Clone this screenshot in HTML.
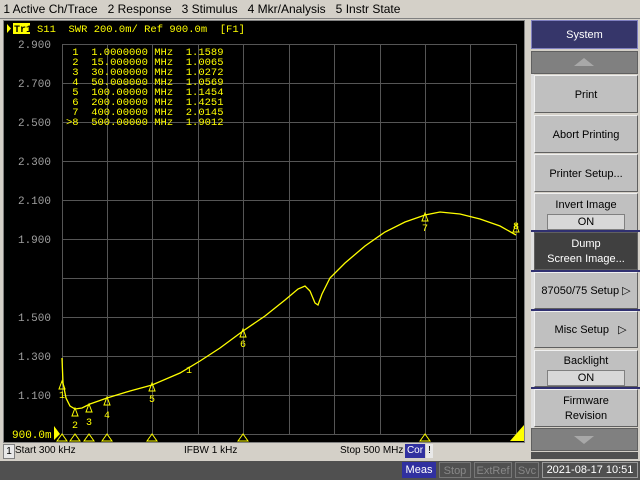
<!DOCTYPE html>
<html><head><style>
body{margin:0;width:640px;height:480px;background:#d4d0c8;font-family:"Liberation Sans",sans-serif;overflow:hidden;position:relative}
.a{position:absolute}
.menu{top:0;left:0;width:640px;height:18px;font-size:12px;line-height:18px;color:#000;border-bottom:1px solid #808080}
.btn{position:absolute;left:534px;width:104px;background:#c0c0c0;border:1px solid;border-color:#f0f0f0 #606060 #606060 #f0f0f0;font-size:11px;text-align:center;box-sizing:border-box;color:#000}
.sep{position:absolute;left:531px;width:109px;height:2px;background:#303070}
.on{margin:2px auto 0;width:76px;height:14px;background:#d8d8d8;border:1px solid #808080;line-height:14px}
svg text{white-space:pre}
</style></head><body>
<div class="a menu">&nbsp;1 Active Ch/Trace&nbsp;&nbsp;&nbsp;2 Response&nbsp;&nbsp;&nbsp;3 Stimulus&nbsp;&nbsp;&nbsp;4 Mkr/Analysis&nbsp;&nbsp;&nbsp;5 Instr State</div>
<div class="a" style="left:3px;top:20px;width:522px;height:423px;background:#000;border:1px solid #808080;box-sizing:border-box"></div>
<svg class="a" style="left:0;top:0" width="530" height="443">
<g stroke="#555" stroke-width="1">
<path d="M62.5 44V434M107.5 44V434M152.5 44V434M198.5 44V434M243.5 44V434M289.5 44V434M334.5 44V434M380.5 44V434M425.5 44V434M470.5 44V434M516.5 44V434"/>
<path d="M62 44.5H516M62 83.5H516M62 122.5H516M62 161.5H516M62 200.5H516M62 239.5H516M62 278.5H516M62 317.5H516M62 356.5H516M62 395.5H516M62 434.5H516"/>
</g>
<g font-family="Liberation Mono,monospace" font-size="11" fill="#a0a0a0" text-anchor="end">
<text x="51" y="48">2.900</text><text x="51" y="87">2.700</text><text x="51" y="126">2.500</text><text x="51" y="165">2.300</text><text x="51" y="204">2.100</text><text x="51" y="243">1.900</text><text x="51" y="321">1.500</text><text x="51" y="360">1.300</text><text x="51" y="399">1.100</text>
</g>
<text x="12" y="438" font-family="Liberation Mono,monospace" font-size="11" fill="#ffff00">900.0m</text>
<rect x="13" y="23" width="17" height="11" fill="#ffff00"/>
<path d="M7 24L11 28.5L7 33Z" fill="#ff0"/>
<text x="14" y="32" font-family="Liberation Mono,monospace" font-size="10" fill="#000" font-weight="bold">Tr1</text>
<text x="37" y="32" font-family="Liberation Mono,monospace" font-size="10.5" fill="#ffff00">S11  SWR 200.0m/ Ref 900.0m  [F1]</text>
<g font-family="Liberation Mono,monospace" font-size="10.5" fill="#ffff00">
<text x="66" y="55"> 1  1.0000000 MHz  1.1589</text>
<text x="66" y="65"> 2  15.000000 MHz  1.0065</text>
<text x="66" y="75"> 3  30.000000 MHz  1.0272</text>
<text x="66" y="85"> 4  50.000000 MHz  1.0569</text>
<text x="66" y="95"> 5  100.00000 MHz  1.1454</text>
<text x="66" y="105"> 6  200.00000 MHz  1.4251</text>
<text x="66" y="115"> 7  400.00000 MHz  2.0145</text>
<text x="66" y="125">&gt;8  500.00000 MHz  1.9012</text>
</g>
<path d="M62 358L63 383L66 398L70 406L75 409L82 408L90 404L107 398L130 391L152 385L180 373L200 361L220 348L243 331L265 316L285 300L298 289L305 286L310 291L315 303L318 305L322 294L330 278L345 263L365 246L385 232L405 222L425 215L440 212L460 214L480 219L500 226L516 235" fill="none" stroke="#ffff00" stroke-width="1.3"/>
<g fill="none" stroke="#ffff00" stroke-width="1">
<path d="M62 381l-3 8h6z M75 408l-3 8h6z M89 404l-3 8h6z M107 397l-3 8h6z M152 383l-3 8h6z M243 329l-3 8h6z M425 213l-3 8h6z M516 224l-3 8h6z"/>
<path d="M62 434l-5 7h10z M75 434l-5 7h10z M89 434l-5 7h10z M107 434l-5 7h10z M152 434l-5 7h10z M243 434l-5 7h10z M425 434l-5 7h10z"/>
</g>
<path d="M524 425L524 441L510 441Z M54 426L60 434L54 440Z" fill="#ffff00"/>
<g font-family="Liberation Mono,monospace" font-size="10" fill="#ffff00" text-anchor="middle">
<text x="62" y="398">1</text><text x="75" y="428">2</text><text x="89" y="425">3</text><text x="107" y="418">4</text><text x="152" y="402">5</text><text x="243" y="347">6</text><text x="425" y="231">7</text><text x="516" y="229">8</text><text x="189" y="373">1</text>
</g>
</svg>
<div class="a" style="left:3px;top:444px;width:522px;height:15px;font-size:10px;line-height:14px">
<span class="a" style="left:0;top:0;width:10px;height:13px;background:#e8e8e8;border:1px solid #808080;text-align:center">1</span>
<span class="a" style="left:12px">Start 300 kHz</span><span class="a" style="left:181px">IFBW 1 kHz</span><span class="a" style="left:337px">Stop 500 MHz</span>
<span class="a" style="left:402px;top:0;width:20px;height:14px;background:#3030a0;color:#fff;text-align:center">Cor</span>
<span class="a" style="left:423px;width:7px;background:#e8e8e8;text-align:center">!</span>
</div>
<div class="a" style="left:0;top:461px;width:640px;height:19px;background:#505050"></div>
<div class="a" style="left:402px;top:462px;width:34px;height:16px;background:#3030a0;color:#fff;font-size:11px;line-height:16px;text-align:center">Meas</div>
<div class="a" style="left:439px;top:462px;width:32px;height:16px;border:1px solid #777;color:#888;font-size:11px;line-height:16px;text-align:center;box-sizing:border-box">Stop</div>
<div class="a" style="left:474px;top:462px;width:38px;height:16px;border:1px solid #777;color:#888;font-size:11px;line-height:16px;text-align:center;box-sizing:border-box">ExtRef</div>
<div class="a" style="left:515px;top:462px;width:24px;height:16px;border:1px solid #777;color:#888;font-size:11px;line-height:16px;text-align:center;box-sizing:border-box">Svc</div>
<div class="a" style="left:542px;top:462px;width:96px;height:16px;border:1px solid #999;color:#fff;font-size:11px;line-height:15px;text-align:center;box-sizing:border-box">2021-08-17 10:51</div>
<div class="a" style="left:528px;top:19px;width:112px;height:441px;background:#d4d0c8"></div>
<div class="a" style="left:531px;top:20px;width:107px;height:29px;background:#36366a;border:1px solid #8080c0;color:#fff;font-size:11px;line-height:29px;text-align:center;box-sizing:border-box">System</div>
<div class="a" style="left:531px;top:51px;width:107px;height:23px;background:#808080;border:1px solid #606060;box-sizing:border-box"><svg width="105" height="21"><path d="M42 14L52 6L62 14Z" fill="#a8a8a8"/></svg></div>
<div class="a" style="left:531px;top:74px;width:3px;height:360px;background:#e0e0e0"></div>
<div class="btn" style="top:75px;height:38px;line-height:38px">Print</div>
<div class="btn" style="top:115px;height:38px;line-height:38px">Abort Printing</div>
<div class="btn" style="top:154px;height:38px;line-height:38px">Printer Setup...</div>
<div class="btn" style="top:193px;height:38px;line-height:14px;padding-top:4px">Invert Image<div class="on">ON</div></div>
<div class="sep" style="top:230px"></div>
<div class="btn" style="top:232px;height:38px;background:#404040;color:#fff;line-height:15px;padding-top:4px;border-color:#606060">Dump<br>Screen Image...</div>
<div class="sep" style="top:270px"></div>
<div class="btn" style="top:272px;height:37px;line-height:37px">87050/75 Setup ▷</div>
<div class="sep" style="top:309px"></div>
<div class="btn" style="top:311px;height:37px;line-height:37px">&nbsp;&nbsp;&nbsp;Misc Setup&nbsp;&nbsp;&nbsp;▷</div>
<div class="btn" style="top:350px;height:37px;line-height:14px;padding-top:3px">Backlight<div class="on">ON</div></div>
<div class="sep" style="top:387px"></div>
<div class="btn" style="top:389px;height:38px;line-height:15px;padding-top:4px">Firmware<br>Revision</div>
<div class="a" style="left:531px;top:428px;width:107px;height:23px;background:#808080;border:1px solid #606060;box-sizing:border-box"><svg width="105" height="21"><path d="M42 7L52 15L62 7Z" fill="#a8a8a8"/></svg></div>
<div class="a" style="left:531px;top:452px;width:107px;height:7px;background:#505050"></div>
</body></html>
